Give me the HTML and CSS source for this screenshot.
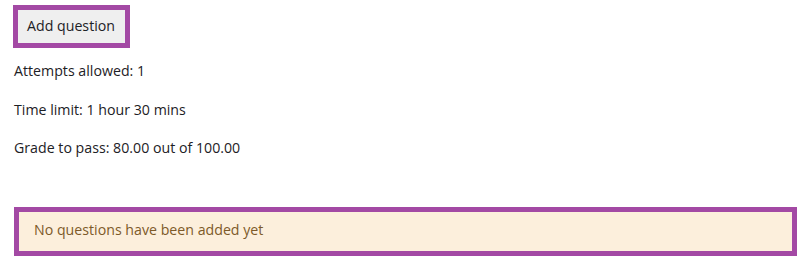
FILE: index.html
```html
<!DOCTYPE html>
<html lang="en">
<head>
<meta charset="utf-8">
<title>Quiz</title>
<link rel="stylesheet" href="styles.css">
</head>
<body>
<div class="page">
  <div class="actions">
    <button class="btn" type="button">Add question</button>
  </div>
  <div class="info">
    <p>Attempts allowed: 1</p>
    <p>Time limit: 1 hour 30 mins</p>
    <p>Grade to pass: 80.00 out of 100.00</p>
  </div>
  <div class="alert">No questions have been added yet</div>
</div>
</body>
</html>
```
FILE: styles.css
```css
html, body {
  margin: 0;
  padding: 0;
  background: #ffffff;
}
body {
  font-family: "Open Sans", "Noto Sans", "Liberation Sans", sans-serif;
  font-size: 14.2px;
  line-height: 22.5px;
  color: #1d2125;
}
.page {
  padding: 5px 10px 0 13px;
}
.actions {
  display: flex;
}
.btn {
  font: inherit;
  color: #1d2125;
  background: #efefef;
  border: 5px solid #a349a4;
  border-radius: 0;
  padding: 5px 10px 5.5px 9px;
  white-space: nowrap;
  margin: 0;
}
.info {
  padding-top: 12px;
}
.info p {
  margin: 0 0 16px 1px;
}
.alert {
  margin: 47px 0 0 1px;
  background: #fcefdc;
  color: #7d5a29;
  border: 5px solid #a349a4;
  padding: 7.5px 14px 9px 15px;
}
```
